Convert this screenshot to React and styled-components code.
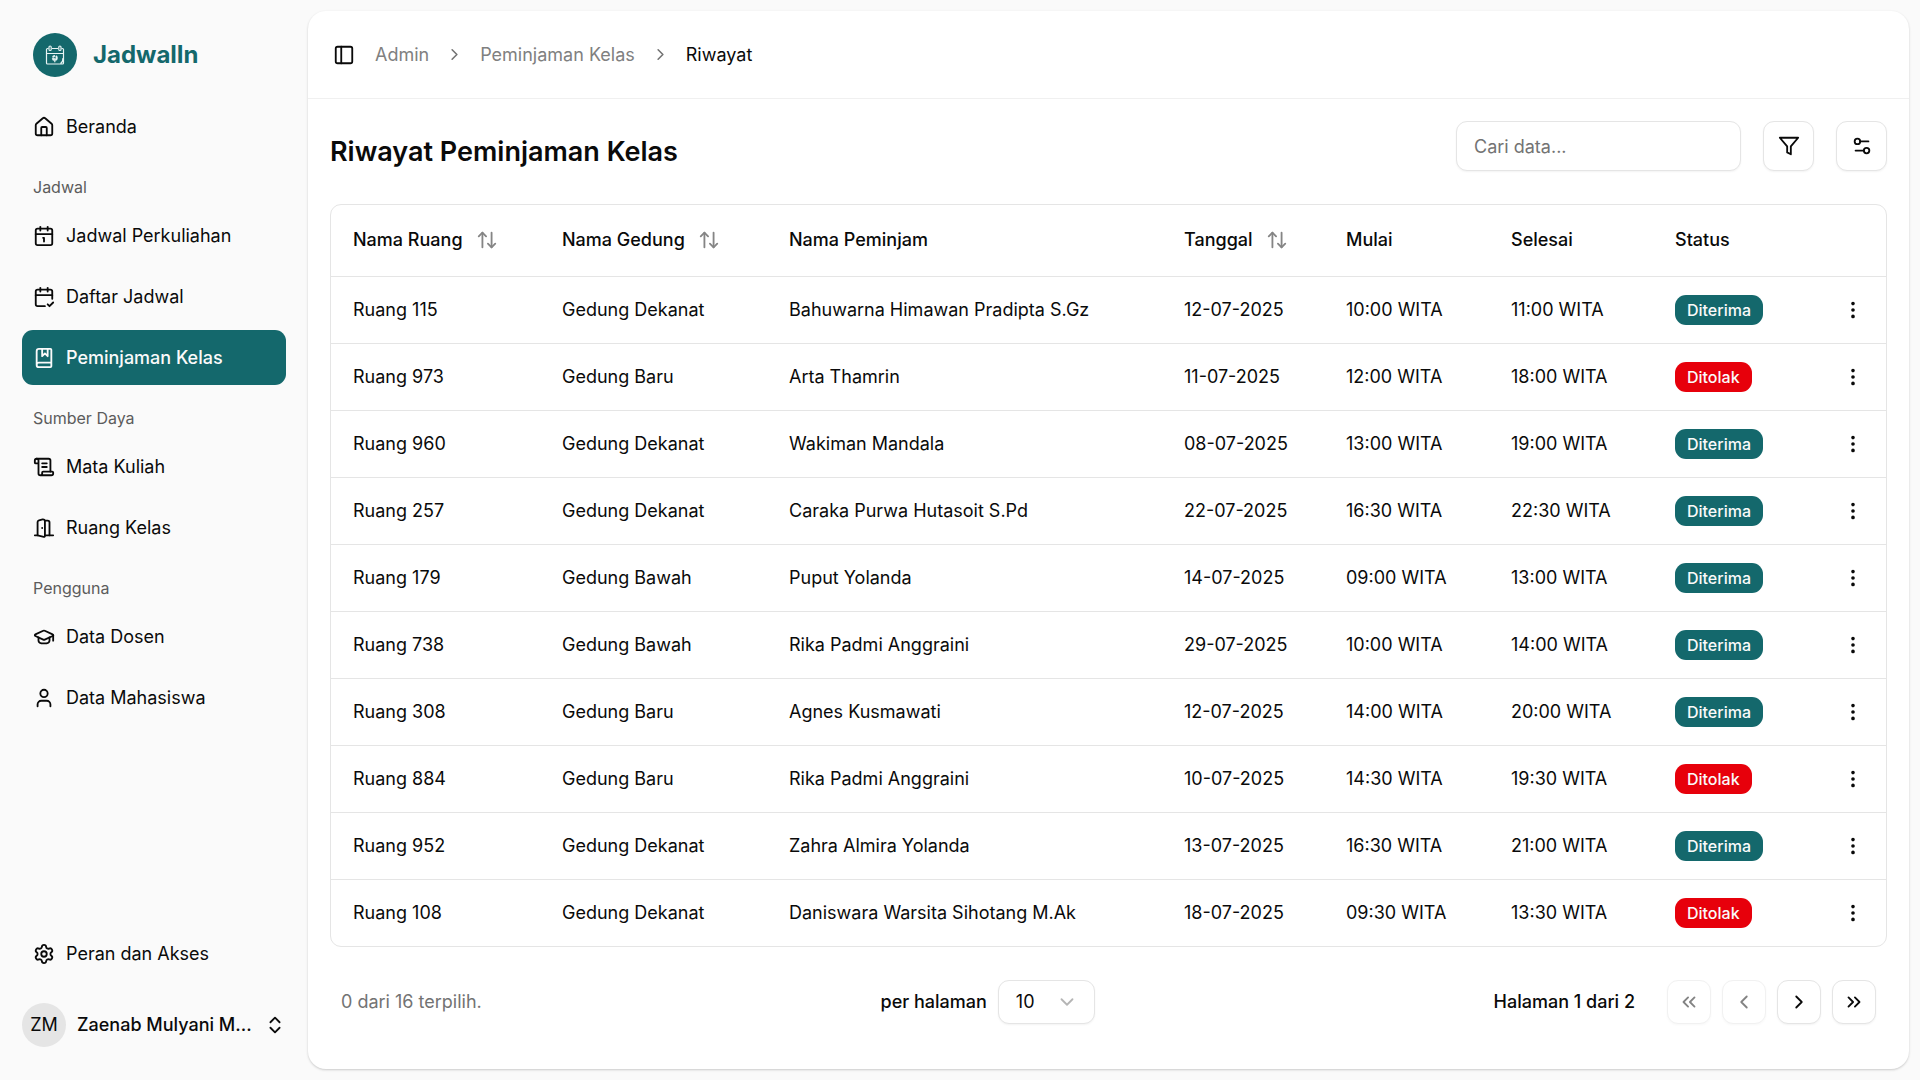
import React from "react";
import styled, { createGlobalStyle, css } from "styled-components";
import {
  House, Calendar1, CalendarCheck2, BookMarked, ScrollText, GraduationCap,
  User, Settings, ChevronsUpDown, PanelLeft, ChevronRight, ArrowUpDown,
  Settings2, EllipsisVertical, ChevronDown, ChevronLeft, ChevronsLeft, ChevronsRight,
} from "lucide-react";

const teal = "#14686c";
const border = "#e5e5e5";
const ink = "#0a0a0a";

const GlobalStyle = createGlobalStyle`
  *, *::before, *::after { box-sizing: border-box; }
  body { margin: 0; background: #fafafa; }
  body, button, input, select {
    font-family: Inter, "Liberation Sans", sans-serif;
    font-size: 18px;
    line-height: 28px;
    color: ${ink};
  }
`;

const Shell = styled.div`
  display: flex;
  min-height: 100vh;
`;

const Sidebar = styled.aside`
  display: flex;
  flex-direction: column;
  flex: none;
  width: 308px;
  padding: 33px 22px;
`;

const Brand = styled.a`
  display: flex;
  align-items: center;
  gap: 16px;
  padding: 0 11px;
  margin-bottom: 22px;
  color: ${teal};
  font-size: 24px;
  font-weight: 700;
  text-decoration: none;
`;

const Nav = styled.nav`
  display: flex;
  flex-direction: column;
  gap: 11px;
  flex: 1;
`;

const NavGroup = styled.section`
  display: flex;
  flex-direction: column;
`;

const NavLabel = styled.h2`
  display: flex;
  align-items: center;
  height: 43px;
  margin: 0;
  padding: 0 11px;
  font-size: 16px;
  font-weight: 400;
  color: #5c5c5c;
`;

const NavList = styled.ul`
  display: flex;
  flex-direction: column;
  gap: 6px;
  margin: 0;
  padding: 0;
  list-style: none;
`;

const NavLink = styled.a`
  display: flex;
  align-items: center;
  gap: 11px;
  height: 55px;
  padding: 0 11px;
  border-radius: 11px;
  color: ${ink};
  text-decoration: none;
  ${(p) => p.$active && css`
    background: ${teal};
    color: #fafafa;
    font-weight: 500;
  `}
`;

const UserButton = styled.button`
  display: flex;
  align-items: center;
  gap: 11px;
  margin-top: 22px;
  padding: 0;
  border: 0;
  background: none;
  font-weight: 500;
  text-align: left;
`;

const Avatar = styled.span`
  display: flex;
  align-items: center;
  justify-content: center;
  flex: none;
  width: 44px;
  height: 44px;
  border-radius: 50%;
  background: #e5e5e5;
  font-weight: 400;
`;

const UserName = styled.span`
  flex: 1;
  white-space: nowrap;
`;

const Panel = styled.main`
  display: flex;
  flex-direction: column;
  flex: 1;
  min-width: 0;
  margin: 11px 11px 11px 0;
  border-radius: 18px;
  background: #fff;
  box-shadow: 0 1px 3px rgba(0, 0, 0, 0.1), 0 1px 2px rgba(0, 0, 0, 0.1);
`;

const TopBar = styled.header`
  display: flex;
  align-items: center;
  gap: 6px;
  height: 88px;
  padding: 0 19px;
  border-bottom: 1px solid #f0f0f0;
`;

const IconButton = styled.button`
  display: flex;
  padding: 6px;
  border: 0;
  background: none;
`;

const Crumbs = styled.ol`
  display: flex;
  align-items: center;
  gap: 16px;
  margin: 0;
  padding: 0 8px;
  list-style: none;
`;

const Crumb = styled.li`
  display: flex;
  align-items: center;
  gap: 16px;
  color: #737373;
`;

const CrumbLink = styled.a`
  color: ${(p) => (p.$current ? ink : "#808080")};
  text-decoration: none;
`;

const Content = styled.div`
  display: flex;
  flex-direction: column;
  padding: 22px;
`;

const Heading = styled.div`
  display: flex;
  justify-content: space-between;
  margin-bottom: 33px;
`;

const Title = styled.h1`
  margin: 12px 0 0;
  font-size: 27px;
  line-height: 38px;
  font-weight: 600;
`;

const Tools = styled.div`
  display: flex;
  gap: 22px;
`;

const outlined = css`
  border: 1px solid ${border};
  border-radius: 11px;
  background: #fff;
  box-shadow: 0 1px 2px rgba(0, 0, 0, 0.05);
`;

const Search = styled.input`
  ${outlined}
  width: 285px;
  height: 50px;
  padding: 0 17px;
  &::placeholder { color: #737373; opacity: 1; }
`;

const SquareButton = styled.button`
  ${outlined}
  display: flex;
  align-items: center;
  justify-content: center;
  width: ${(p) => (p.$large ? 51 : 44)}px;
  height: ${(p) => (p.$large ? 50 : 44)}px;
  padding: 0;
  &:disabled { opacity: 0.5; color: ${ink}; }
`;

const TableFrame = styled.div`
  border: 1px solid ${border};
  border-radius: 11px;
  overflow: hidden;
`;

const Table = styled.table`
  width: 100%;
  table-layout: fixed;
  border-collapse: collapse;
`;

const Col = styled.col`
  width: ${(p) => (p.$width ? `${p.$width}px` : "auto")};
`;

const HeadCell = styled.th`
  height: 71px;
  padding: 0 0 0 22px;
  font-weight: 500;
  text-align: left;
  white-space: nowrap;
`;

const SortButton = styled.button`
  display: flex;
  align-items: center;
  gap: 13px;
  padding: 0;
  border: 0;
  background: none;
  font-weight: 500;
  svg { color: #858585; }
`;

const Cell = styled.td`
  height: 67px;
  padding: 0 0 0 22px;
  border-top: 1px solid ${border};
  white-space: nowrap;
`;

const ActionCell = styled(Cell)`
  padding: 0;
`;

const RowMenu = styled(IconButton)`
  margin: 0 auto;
`;

const Badge = styled.span`
  display: inline-block;
  padding: 1px 12px;
  border-radius: 11px;
  background: ${(p) => (p.$rejected ? "#e7000b" : teal)};
  color: #fafafa;
  font-size: 16px;
  font-weight: 500;
`;

const Footer = styled.footer`
  display: flex;
  align-items: center;
  justify-content: space-between;
  margin-top: 33px;
  padding: 0 11px;
`;

const Muted = styled.span`
  color: #737373;
`;

const PageSize = styled.label`
  display: flex;
  align-items: center;
  gap: 11px;
  font-weight: 500;
`;

const SelectWrap = styled.span`
  display: grid;
  align-items: center;
  > * { grid-area: 1 / 1; }
  svg {
    justify-self: end;
    margin-right: 17px;
    color: #b5b5b5;
    pointer-events: none;
  }
`;

const Select = styled.select`
  ${outlined}
  appearance: none;
  width: 97px;
  height: 44px;
  padding: 0 17px;
`;

const Pager = styled.div`
  display: flex;
  align-items: center;
  gap: 11px;
`;

const PageText = styled.span`
  margin-right: 21px;
  font-weight: 500;
`;

const LineIcon = ({ children }) => (
  <svg width="22" height="22" viewBox="0 0 24 24" fill="none" stroke="currentColor" strokeWidth="2" strokeLinecap="round" strokeLinejoin="round" aria-hidden="true">
    {children}
  </svg>
);

const Door = () => (
  <LineIcon>
    <path d="M13 20h9" />
    <path d="M13 4.562v16.157a1 1 0 0 1-1.242.97L5 20V5.562a2 2 0 0 1 1.515-1.940l4-1A2 2 0 0 1 13 4.561z" />
    <path d="M13 4h3a2 2 0 0 1 2 2v14" />
    <path d="M10 12h-.010" />
    <path d="M2 20h3" />
  </LineIcon>
);

const Filter = () => (
  <LineIcon>
    <polygon points="22 3 2 3 10 12.460 10 19 14 21 14 12.460 22 3" />
  </LineIcon>
);

const Logo = () => (
  <svg width="44" height="44" viewBox="0 0 44 44" fill="none" stroke="#e8f4f4" strokeWidth="1.2" aria-hidden="true">
    <circle cx="22" cy="22" r="22" fill={teal} stroke="none" />
    <path d="M15.500 15.500H14.500a1 1 0 0 0-1 1V30a1 1 0 0 0 1 1h15a1 1 0 0 0 1-1V16.500a1 1 0 0 0-1-1h-1M19 15.500h6M13.500 20.500h17M30 25q0 4-2.500 5.500" />
    <rect x="16" y="13" width="2.200" height="4.500" rx="1.100" />
    <rect x="25.800" y="13" width="2.200" height="4.500" rx="1.100" />
    <circle cx="21.800" cy="25" r="2" strokeWidth="2" strokeDasharray="2.400 0.700" />
    <path d="M21.800 25v4.200" />
  </svg>
);

const groups = [
  { items: [["Beranda", House]] },
  { label: "Jadwal", items: [["Jadwal Perkuliahan", Calendar1], ["Daftar Jadwal", CalendarCheck2], ["Peminjaman Kelas", BookMarked, true]] },
  { label: "Sumber Daya", items: [["Mata Kuliah", ScrollText], ["Ruang Kelas", Door]] },
  { label: "Pengguna", items: [["Data Dosen", GraduationCap], ["Data Mahasiswa", User]] },
];

const columns = [
  ["Nama Ruang", 209, true], ["Nama Gedung", 227, true], ["Nama Peminjam", 0], ["Tanggal", 162, true],
  ["Mulai", 165], ["Selesai", 164], ["Status", 167],
];

const rows = [
  ["Ruang 115", "Gedung Dekanat", "Bahuwarna Himawan Pradipta S.Gz", "12-07-2025", "10:00 WITA", "11:00 WITA", "Diterima"],
  ["Ruang 973", "Gedung Baru", "Arta Thamrin", "11-07-2025", "12:00 WITA", "18:00 WITA", "Ditolak"],
  ["Ruang 960", "Gedung Dekanat", "Wakiman Mandala", "08-07-2025", "13:00 WITA", "19:00 WITA", "Diterima"],
  ["Ruang 257", "Gedung Dekanat", "Caraka Purwa Hutasoit S.Pd", "22-07-2025", "16:30 WITA", "22:30 WITA", "Diterima"],
  ["Ruang 179", "Gedung Bawah", "Puput Yolanda", "14-07-2025", "09:00 WITA", "13:00 WITA", "Diterima"],
  ["Ruang 738", "Gedung Bawah", "Rika Padmi Anggraini", "29-07-2025", "10:00 WITA", "14:00 WITA", "Diterima"],
  ["Ruang 308", "Gedung Baru", "Agnes Kusmawati", "12-07-2025", "14:00 WITA", "20:00 WITA", "Diterima"],
  ["Ruang 884", "Gedung Baru", "Rika Padmi Anggraini", "10-07-2025", "14:30 WITA", "19:30 WITA", "Ditolak"],
  ["Ruang 952", "Gedung Dekanat", "Zahra Almira Yolanda", "13-07-2025", "16:30 WITA", "21:00 WITA", "Diterima"],
  ["Ruang 108", "Gedung Dekanat", "Daniswara Warsita Sihotang M.Ak", "18-07-2025", "09:30 WITA", "13:30 WITA", "Ditolak"],
];

export default function App() {
  return (
    <Shell>
      <GlobalStyle />
      <Sidebar>
        <Brand href="#"><Logo />JadwalIn</Brand>
        <Nav>
          {groups.map((group, i) => (
            <NavGroup key={i}>
              {group.label && <NavLabel>{group.label}</NavLabel>}
              <NavList>
                {group.items.map(([name, Icon, active]) => (
                  <li key={name}>
                    <NavLink href="#" $active={active}><Icon size={22} />{name}</NavLink>
                  </li>
                ))}
              </NavList>
            </NavGroup>
          ))}
        </Nav>
        <NavLink href="#"><Settings size={22} />Peran dan Akses</NavLink>
        <UserButton type="button">
          <Avatar>ZM</Avatar>
          <UserName>Zaenab Mulyani M...</UserName>
          <ChevronsUpDown size={22} />
        </UserButton>
      </Sidebar>
      <Panel>
        <TopBar>
          <IconButton type="button" aria-label="Sidebar"><PanelLeft size={22} /></IconButton>
          <Crumbs>
            <Crumb><CrumbLink href="#">Admin</CrumbLink><ChevronRight size={19} /></Crumb>
            <Crumb><CrumbLink href="#">Peminjaman Kelas</CrumbLink><ChevronRight size={19} /></Crumb>
            <Crumb><CrumbLink href="#" $current>Riwayat</CrumbLink></Crumb>
          </Crumbs>
        </TopBar>
        <Content>
          <Heading>
            <Title>Riwayat Peminjaman Kelas</Title>
            <Tools>
              <Search type="search" placeholder="Cari data..." aria-label="Cari data" />
              <SquareButton type="button" aria-label="Filter" $large><Filter /></SquareButton>
              <SquareButton type="button" aria-label="Kolom" $large><Settings2 size={22} /></SquareButton>
            </Tools>
          </Heading>
          <TableFrame>
            <Table>
              <colgroup>
                {columns.map(([name, width]) => <Col key={name} $width={width} />)}
                <Col $width={66} />
              </colgroup>
              <thead>
                <tr>
                  {columns.map(([name, , sortable]) => (
                    <HeadCell key={name} scope="col">
                      {sortable ? <SortButton type="button">{name}<ArrowUpDown size={22} /></SortButton> : name}
                    </HeadCell>
                  ))}
                  <HeadCell />
                </tr>
              </thead>
              <tbody>
                {rows.map((row) => (
                  <tr key={row[0]}>
                    {row.slice(0, 6).map((value, i) => <Cell key={i}>{value}</Cell>)}
                    <Cell><Badge $rejected={row[6] === "Ditolak"}>{row[6]}</Badge></Cell>
                    <ActionCell>
                      <RowMenu type="button" aria-label="Menu"><EllipsisVertical size={22} /></RowMenu>
                    </ActionCell>
                  </tr>
                ))}
              </tbody>
            </Table>
          </TableFrame>
          <Footer>
            <Muted>0 dari 16 terpilih.</Muted>
            <PageSize>
              per halaman
              <SelectWrap>
                <Select defaultValue="10"><option>10</option><option>20</option></Select>
                <ChevronDown size={22} />
              </SelectWrap>
            </PageSize>
            <Pager>
              <PageText>Halaman 1 dari 2</PageText>
              <SquareButton type="button" disabled aria-label="Pertama"><ChevronsLeft size={22} /></SquareButton>
              <SquareButton type="button" disabled aria-label="Sebelumnya"><ChevronLeft size={22} /></SquareButton>
              <SquareButton type="button" aria-label="Berikutnya"><ChevronRight size={22} /></SquareButton>
              <SquareButton type="button" aria-label="Terakhir"><ChevronsRight size={22} /></SquareButton>
            </Pager>
          </Footer>
        </Content>
      </Panel>
    </Shell>
  );
}
